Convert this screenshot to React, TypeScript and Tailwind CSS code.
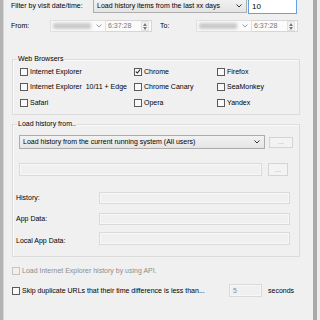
import React from "react";

function Chevron({ color = "#333" }: { color?: string }) {
  return (
    <svg width="6" height="4" viewBox="0 0 6 4" className="shrink-0">
      <path d="M0.5 0.5 L3 3 L5.5 0.5" fill="none" stroke={color} strokeWidth="1" />
    </svg>
  );
}

function Spinner() {
  return (
    <div className="w-[8px] h-[10px] flex flex-col items-center justify-center gap-[1px] border border-[#e2e2e2] bg-[#f4f4f4]">
      <svg width="4" height="3" viewBox="0 0 4 3">
        <path d="M0 3 L2 0 L4 3 Z" fill="#7a7a7a" />
      </svg>
      <svg width="4" height="3" viewBox="0 0 4 3">
        <path d="M0 0 L2 3 L4 0 Z" fill="#7a7a7a" />
      </svg>
    </div>
  );
}

function CheckBox({ checked, disabled }: { checked?: boolean; disabled?: boolean }) {
  return (
    <span
      className={
        disabled
          ? "w-[8px] h-[8px] shrink-0 border border-[#c4c4c4] bg-[#f0f0f0] flex items-center justify-center"
          : "w-[8px] h-[8px] shrink-0 border border-[#5a5a5a] bg-[#f9f9f9] flex items-center justify-center"
      }
    >
      {checked && (
        <svg width="7" height="7" viewBox="0 0 7 7">
          <path d="M1 3.6 L2.8 5.3 L6 1.2" fill="none" stroke="#1a1a1a" strokeWidth="1.2" />
        </svg>
      )}
    </span>
  );
}

function CheckItem({ label, checked }: { label: string; checked?: boolean }) {
  return (
    <div className="flex items-center h-[15.5px]">
      <CheckBox checked={checked} />
      <span className="ml-[2px] whitespace-pre">{label}</span>
    </div>
  );
}

function DatePicker() {
  return (
    <div className="flex h-[12px] w-[102px]">
      <div className="w-[56px] h-full bg-[#fbfbfb] border border-[#e0e0e0] flex items-center pl-[2px] pr-[3px]">
        <span className="w-[38px] h-[6px] bg-[#c9c9c9] blur-[1.5px] rounded-[1px]" />
        <span className="flex-1" />
        <Chevron color="#9a9a9a" />
      </div>
      <div className="flex-1 h-full bg-[#fbfbfb] border border-l-0 border-[#d6d6d6] flex items-center pl-[2px] pr-[2px] text-[#777]">
        <span>6:37:28</span>
        <span className="flex-1" />
        <Spinner />
      </div>
    </div>
  );
}

function DisabledField({ w, h, children }: { w: string; h: string; children?: React.ReactNode }) {
  return (
    <div className={`${w} ${h} border border-[#dadada] bg-[#f0f0f0] shadow-[inset_0_0_0_1px_#f7f7f7] flex items-center px-[3px] text-[#8c8c8c]`}>
      {children}
    </div>
  );
}

function DotsButton({ w, h }: { w: string; h: string }) {
  return (
    <div className={`${w} ${h} border border-[#d4d4d4] bg-[#f3f3f3] flex items-center justify-center text-[#a8a8a8] leading-[6px]`}>
      ...
    </div>
  );
}

export default function App() {
  return (
    <div className="w-[320px] h-[320px] overflow-hidden bg-[#f0f0f0] flex font-['Liberation_Sans',Arial,sans-serif] text-[7px] leading-[8px] text-black">
      <div className="w-[4px] h-full shrink-0 bg-[#b3b3b3] border-r border-[#d6d6d6]" />
      <div className="w-[309px] shrink-0 flex flex-col">
        {/* Row 1 */}
        <div className="flex items-start h-[17px] -mt-[3px] shrink-0">
          <div className="w-[89px] pl-[7px] h-[17px] flex items-center pt-[1px]">Filter by visit date/time:</div>
          <div className="w-[154px] h-[16px] border border-[#adadad] bg-linear-to-b from-[#f3f3f3] to-[#e4e4e4] flex items-center pl-[3px] pr-[4px] pt-[2px]">
            <span>Load history items from the last xx days</span>
            <span className="flex-1" />
            <Chevron />
          </div>
          <div className="ml-[1px] w-[49px] h-[17px] border border-[#5fa2e6] bg-white flex items-center pl-[3px] pt-[2px] text-[8px]">
            10
          </div>
        </div>

        {/* Row 2 */}
        <div className="flex items-center h-[12px] mt-[6px] shrink-0">
          <div className="w-[46px] pl-[7px]">From:</div>
          <DatePicker />
          <div className="w-[44px] pl-[8px]">To:</div>
          <DatePicker />
        </div>

        {/* Web Browsers group */}
        <div className="relative ml-[8px] mt-[27px] w-[288px] h-[56px] shrink-0 border border-[#dcdcdc] shadow-[inset_1px_1px_0_#fafafa]">
          <span className="absolute -top-[5px] left-[4px] px-[1px] bg-[#f0f0f0]">Web Browsers</span>
          <div className="grid grid-cols-[114px_83px_1fr] pl-[7px] pt-[4px]">
            <CheckItem label="Internet Explorer" />
            <CheckItem label="Chrome" checked />
            <CheckItem label="Firefox" />
            <CheckItem label="Internet Explorer  10/11 + Edge" />
            <CheckItem label="Chrome Canary" />
            <CheckItem label="SeaMonkey" />
            <CheckItem label="Safari" />
            <CheckItem label="Opera" />
            <CheckItem label="Yandex" />
          </div>
        </div>

        {/* Load history group */}
        <div className="relative ml-[8px] mt-[9px] w-[288px] h-[133px] shrink-0 border border-[#dcdcdc] shadow-[inset_1px_1px_0_#fafafa] flex flex-col">
          <span className="absolute -top-[5px] left-[4px] px-[1px] bg-[#f0f0f0]">Load history from..</span>
          <div className="flex items-center mt-[10px] ml-[6px] h-[14px]">
            <div className="w-[246px] h-[14px] border border-[#acacac] bg-linear-to-b from-[#f2f2f2] to-[#e5e5e5] flex items-center pl-[3px] pr-[4px]">
              <span>Load history from the current running system (All users)</span>
              <span className="flex-1" />
              <Chevron />
            </div>
            <div className="ml-[4px]">
              <DotsButton w="w-[24px]" h="h-[11px]" />
            </div>
          </div>
          <div className="flex items-center mt-[14px] ml-[6px] h-[13px]">
            <DisabledField w="w-[243px]" h="h-[13px]" />
            <div className="ml-[6px]">
              <DotsButton w="w-[20px]" h="h-[13px]" />
            </div>
          </div>
          <div className="flex items-center mt-[16px] h-[12px]">
            <div className="w-[86px] pl-[3px]">History:</div>
            <DisabledField w="w-[191px]" h="h-[12px]" />
          </div>
          <div className="flex items-center mt-[9px] h-[12px]">
            <div className="w-[86px] pl-[3px]">App Data:</div>
            <DisabledField w="w-[191px]" h="h-[12px]" />
          </div>
          <div className="flex items-start mt-[7px] h-[13px]">
            <div className="w-[86px] pl-[3px] pt-[5px]">Local App Data:</div>
            <DisabledField w="w-[191px]" h="h-[13px]" />
          </div>
        </div>

        {/* Bottom options */}
        <div className="flex items-center ml-[8px] mt-[9px] h-[10px] shrink-0">
          <CheckBox disabled />
          <span className="ml-[2px] text-[#8d8d8d]">Load Internet Explorer history by using API.</span>
        </div>
        <div className="flex items-center ml-[8px] mt-[8px] h-[13px] shrink-0">
          <CheckBox />
          <span className="ml-[2px] w-[207px]">Skip duplicate URLs that their time difference is less than...</span>
          <DisabledField w="w-[33px]" h="h-[13px]">5</DisabledField>
          <span className="ml-[6px]">seconds</span>
        </div>
      </div>
      <div className="w-[4px] h-full shrink-0 bg-[#a9a9a9]" />
      <div className="flex-1 bg-[#ececec]" />
    </div>
  );
}
